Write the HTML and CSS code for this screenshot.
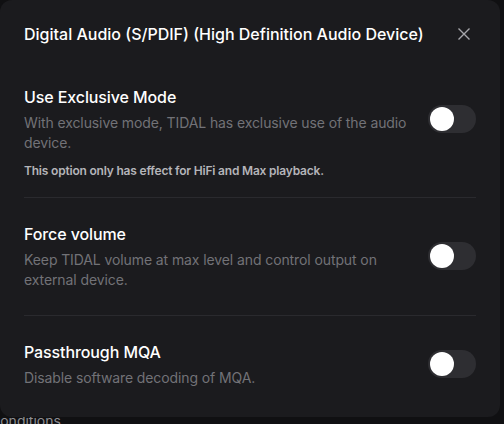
FILE: index.html
```html
<!DOCTYPE html>
<html lang="en">
<head>
  <meta charset="UTF-8">
  <title>Audio device settings</title>
  <link rel="stylesheet" href="styles.css">
</head>
<body>

  <div class="page">
    <a class="page-link" href="#">Conditions</a>
  </div>

  <div class="dialog" role="dialog">
    <div class="dialog-header">
      <h2>Digital Audio (S/PDIF) (High Definition Audio Device)</h2>
      <button class="close-btn" aria-label="Close">
        <svg width="12" height="12" viewBox="0 0 12 12">
          <path d="M0.5 0.5 L11.5 11.5 M11.5 0.5 L0.5 11.5" stroke="#a6a6ab" stroke-width="1.4" fill="none"/>
        </svg>
      </button>
    </div>

    <div class="option option--note">
      <div class="option-row">
        <div class="option-text">
          <h3>Use Exclusive Mode</h3>
          <p>With exclusive mode, TIDAL has exclusive use of the audio device.</p>
        </div>
        <span class="toggle"><span class="knob"></span></span>
      </div>
      <div class="option-note">This option only has effect for HiFi and Max playback.</div>
    </div>

    <div class="option">
      <div class="option-row">
        <div class="option-text">
          <h3>Force volume</h3>
          <p>Keep TIDAL volume at max level and control output on external device.</p>
        </div>
        <span class="toggle"><span class="knob"></span></span>
      </div>
    </div>

    <div class="option option--last">
      <div class="option-row">
        <div class="option-text">
          <h3>Passthrough MQA</h3>
          <p>Disable software decoding of MQA.</p>
        </div>
        <span class="toggle"><span class="knob"></span></span>
      </div>
    </div>
  </div>

</body>
</html>
```

FILE: styles.css
```css
* {
  margin: 0;
  padding: 0;
  box-sizing: border-box;
}

body {
  background-color: #101012;
  font-family: Inter, "Noto Sans", sans-serif;
  overflow: hidden;
  height: 424px;
}

.page {
  padding-top: 410px;
}

.page-link {
  display: inline-block;
  margin-left: -10px;
  color: #8e8e93;
  font-size: 14px;
  line-height: 20px;
  text-decoration: none;
}

.dialog {
  position: absolute;
  top: 0;
  left: 0;
  width: 500px;
  background-color: #1b1b1e;
  border-radius: 12px;
  padding: 0 24px;
}

.dialog-header {
  display: flex;
  justify-content: space-between;
  align-items: center;
  padding: 22px 0 15px;
}

.dialog-header h2 {
  font-size: 16px;
  line-height: 24px;
  font-weight: 500;
  color: #ffffff;
}

.close-btn {
  width: 24px;
  height: 24px;
  border: none;
  background: none;
  display: flex;
  align-items: center;
  justify-content: center;
  cursor: pointer;
}

.option {
  padding: 24px 0 25px;
  border-bottom: 1px solid #2a2a2e;
}

.option--note {
  padding-bottom: 18px;
}

.option--last {
  border-bottom: none;
  padding-bottom: 29px;
}

.option-row {
  display: flex;
  align-items: center;
  gap: 12px;
}

.option-text {
  flex: 1;
}

.option-text h3 {
  font-size: 16px;
  line-height: 24px;
  font-weight: 500;
  color: #ffffff;
  letter-spacing: -0.1px;
}

.option-text p {
  margin-top: 4px;
  font-size: 14px;
  line-height: 20px;
  color: #727277;
  letter-spacing: -0.1px;
}

.option-note {
  margin-top: 10px;
  font-size: 12px;
  line-height: 16px;
  font-weight: 600;
  color: #b4b4b9;
  letter-spacing: -0.2px;
}

.toggle {
  display: flex;
  align-items: center;
  width: 48px;
  height: 28px;
  padding: 2px;
  border-radius: 14px;
  background-color: #2e2e32;
}

.knob {
  width: 24px;
  height: 24px;
  border-radius: 50%;
  background-color: #ffffff;
}
```
